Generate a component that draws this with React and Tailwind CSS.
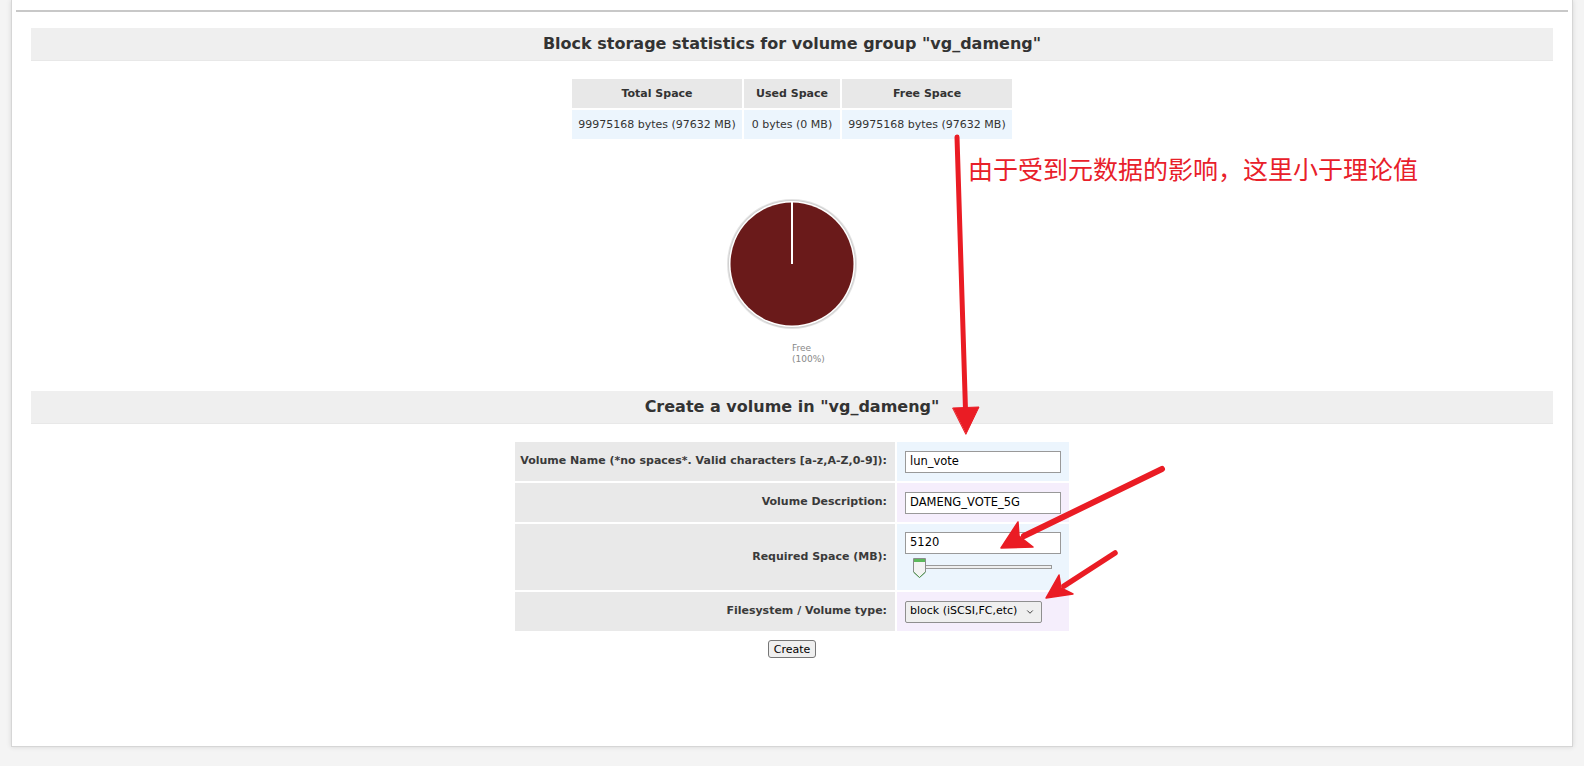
import React from 'react';
import { ChevronDown } from 'lucide-react';

const stats = [
  { head: 'Total Space', value: '99975168 bytes (97632 MB)' },
  { head: 'Used Space', value: '0 bytes (0 MB)' },
  { head: 'Free Space', value: '99975168 bytes (97632 MB)' },
];

const SectionTitle = ({ children }) => (
  <div className="h-[33px] bg-[#efefef] border-b border-[#e8e8e8] flex items-center justify-center text-[16px] font-bold text-[#333]">
    {children}
  </div>
);

const FormLabel = ({ children, tall }) => (
  <div
    className={`bg-[#e9e9e9] flex items-center justify-end pr-[8px] text-[11px] font-bold text-[#3a3a3a] ${
      tall ? 'h-[66px]' : 'h-[39px]'
    }`}
  >
    {children}
  </div>
);

const TextBox = ({ value }) => (
  <div className="w-[156px] h-[22px] bg-white border border-[#999] flex items-center px-[4px] text-[11.5px] text-black">
    {value}
  </div>
);

// pie with one slice (100% free)
const Pie = () => (
  <svg width="132" height="132" viewBox="0 0 132 132" className="block">
    <circle cx="66" cy="66" r="65" fill="#e4e4e4" />
    <circle cx="66" cy="66" r="64" fill="#d0d0d0" />
    <circle cx="66" cy="66" r="63" fill="#ffffff" />
    <circle cx="66" cy="66" r="61.5" fill="#6a1a1a" />
    <line x1="66" y1="3" x2="66" y2="66" stroke="#ffffff" strokeWidth="2" />
  </svg>
);

const SliderHandle = () => (
  <svg width="15" height="22" viewBox="0 0 15 22" className="block">
    <path d="M1.5 1.5 H13.5 V15 L7.5 20.5 L1.5 15 Z" fill="#f3f3f3" stroke="#8c8c8c" />
    <path d="M2 2 H13 V5 H2 Z" fill="#5cb85c" />
    <path d="M1.5 15 L7.5 20.5 L13.5 15" fill="none" stroke="#4e9a4e" />
  </svg>
);

export default function App() {
  return (
    <div className="relative w-[1584px] h-[766px] overflow-hidden bg-[#f4f4f4] font-['DejaVu_Sans',sans-serif]">
      <div className="ml-[11px] w-[1562px] h-[747px] bg-white border-x border-b border-[#d6d6d6] shadow-[0_0_5px_rgba(0,0,0,0.12)] pl-[4px] pr-[4px] pt-[10px]">
        <div className="h-[2px] bg-[#c8c8c8]" />

        <div className="mx-[15px] mt-[16px]">
          <SectionTitle>Block storage statistics for volume group "vg_dameng"</SectionTitle>

          {/* stats table */}
          <div className="mt-[18px] mx-auto w-[440px] grid grid-cols-[170px_96px_170px] gap-[2px]">
            {stats.map((s) => (
              <div
                key={s.head}
                className="h-[29px] pt-[2px] bg-[#e8e8e8] flex items-center justify-center text-[11px] font-bold text-[#333]"
              >
                {s.head}
              </div>
            ))}
            {stats.map((s) => (
              <div
                key={s.head + 'v'}
                className="h-[29px] pt-[2px] bg-[#ecf5fd] flex items-center justify-center text-[11px] text-[#333] whitespace-nowrap"
              >
                {s.value}
              </div>
            ))}
          </div>

          <div className="mt-[59px] flex justify-center">
            <Pie />
          </div>
          <div className="mt-[13px] mx-auto w-[126px] pl-[63px] text-[9px] leading-[11px] text-[#888] whitespace-nowrap">
            <div>Free</div>
            <div>(100%)</div>
          </div>

          <div className="mt-[26px]">
            <SectionTitle>Create a volume in "vg_dameng"</SectionTitle>
          </div>

          {/* create form */}
          <div className="mt-[18px] mx-auto w-[554px] grid grid-cols-[380px_172px] gap-[2px]">
            <FormLabel>Volume Name (*no spaces*. Valid characters [a-z,A-Z,0-9]):</FormLabel>
            <div className="h-[39px] bg-[#ecf5fd] flex items-center pl-[8px]">
              <TextBox value="lun_vote" />
            </div>

            <FormLabel>Volume Description:</FormLabel>
            <div className="h-[39px] bg-[#f5eefc] flex items-center pl-[8px]">
              <TextBox value="DAMENG_VOTE_5G" />
            </div>

            <FormLabel tall>Required Space (MB):</FormLabel>
            <div className="h-[66px] bg-[#ecf5fd] pl-[8px] pt-[8px]">
              <TextBox value="5120" />
              <div className="relative mt-[3px] h-[22px]">
                <div className="absolute left-[14px] top-[8px] w-[133px] h-[4px] bg-[#efefef] border border-[#9a9a9a]" />
                <div className="absolute left-[7px] top-0">
                  <SliderHandle />
                </div>
              </div>
            </div>

            <FormLabel>Filesystem / Volume type:</FormLabel>
            <div className="h-[39px] bg-[#f5eefc] flex items-center pl-[8px]">
              <div className="w-[137px] h-[22px] bg-[#efefef] border border-[#8f8f8f] rounded-[2px] flex items-center gap-[8px] pl-[4px] text-[11px] text-black">
                <span>block (iSCSI,FC,etc)</span>
                <ChevronDown size={10} strokeWidth={2.2} className="text-[#333]" />
              </div>
            </div>
          </div>

          <div className="mt-[9px] flex justify-center">
            <button className="h-[18px] px-[5px] bg-[#efefef] border border-[#767676] rounded-[3px] text-[11px] leading-none text-black">
              Create
            </button>
          </div>
        </div>
      </div>

      {/* annotation */}
      <div className="absolute left-[968px] top-[156px] text-[25px] leading-[25px] text-[#e8202a] whitespace-nowrap font-['Noto_Sans_CJK_SC',sans-serif]">
        由于受到元数据的影响，这里小于理论值
      </div>

      <svg
        className="absolute left-0 top-0 pointer-events-none"
        width="1584"
        height="766"
        viewBox="0 0 1584 766"
      >
        <g fill="#ea1c24" stroke="#ea1c24" strokeLinecap="round" strokeLinejoin="round">
          <path d="M957 137 L965.5 410" strokeWidth="5" fill="none" />
          <path d="M953 408 L979 407 L966 434 Z" strokeWidth="1" />

          <path d="M1162 469 L1024 536" strokeWidth="6" fill="none" />
          <path d="M1001 548 L1018 522 L1019 536 L1033 547 Z" strokeWidth="1.5" />

          <path d="M1115 553 L1064 586" strokeWidth="5.5" fill="none" />
          <path d="M1046 598 L1059 575 L1061 588 L1073 594 Z" strokeWidth="1.5" />
        </g>
      </svg>
    </div>
  );
}
